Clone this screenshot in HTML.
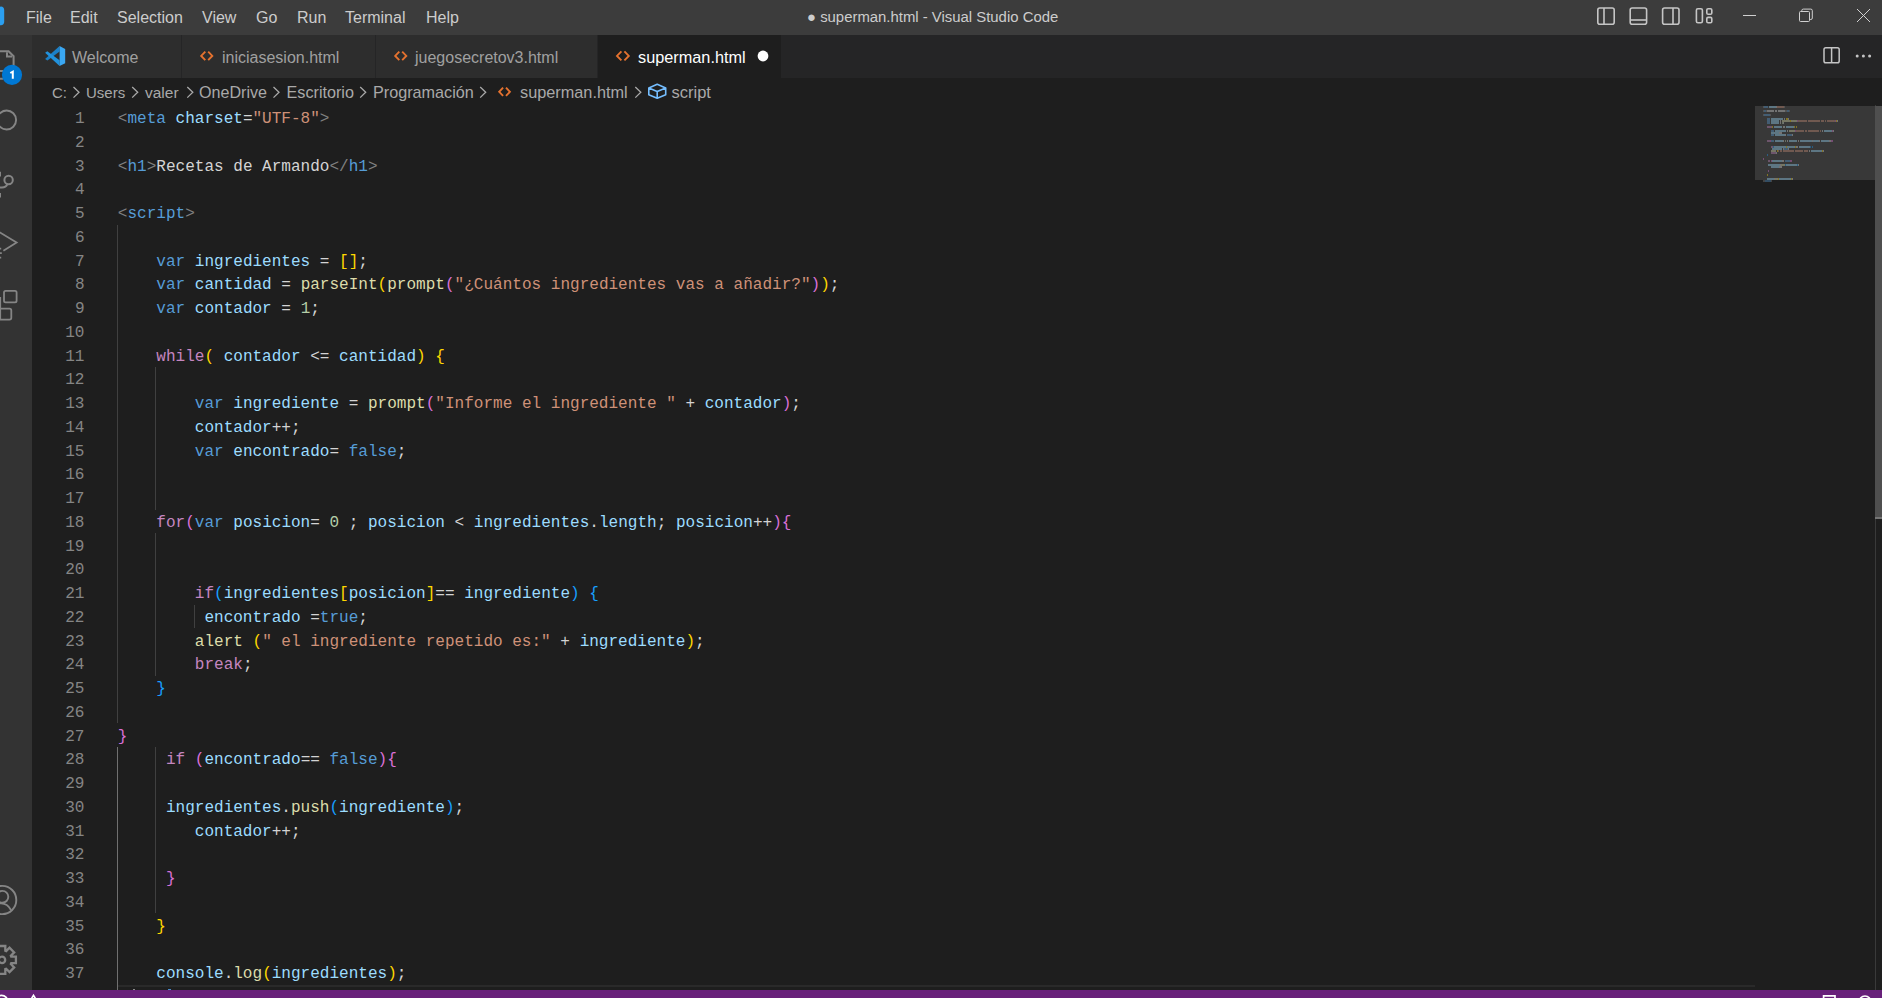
<!DOCTYPE html>
<html><head><meta charset="utf-8">
<style>
*{margin:0;padding:0;box-sizing:border-box}
html,body{width:1882px;height:998px;overflow:hidden;background:#1e1e1e;font-family:"Liberation Sans",sans-serif}
.abs{position:absolute}
#title{position:absolute;left:0;top:0;width:1882px;height:35px;background:#3c3c3c}
.mi{position:absolute;top:0;height:35px;line-height:35px;font-size:16px;color:#cccccc;white-space:nowrap}
#act{position:absolute;left:0;top:35px;width:32px;height:955px;background:#333333;overflow:hidden}
#tabs{position:absolute;left:32px;top:35px;width:1850px;height:43px;background:#252526}
.tab{position:absolute;top:0;height:43px;background:#2d2d2d;border-right:1px solid #252526}
.tt{position:absolute;top:36.2px;height:43px;line-height:43px;font-size:16px;color:#a0a0a0;white-space:nowrap}
#bc{position:absolute;left:32px;top:78px;width:1850px;height:27px;background:#1e1e1e}
.bt{position:absolute;top:79px;height:27px;line-height:27px;font-size:15px;color:#a9a9a9;white-space:nowrap}
.ln{position:absolute;left:32px;width:52.5px;text-align:right;height:23.75px;line-height:23.75px;font-family:"Liberation Mono",monospace;font-size:16.05px;color:#858585}
.cl{position:absolute;left:117.8px;height:23.75px;line-height:23.75px;font-family:"Liberation Mono",monospace;font-size:16.05px;white-space:pre;color:#d4d4d4}
.ig{position:absolute;width:1px}
.mm{position:absolute;height:2px;opacity:0.38}
#status{position:absolute;left:0;top:990px;width:1882px;height:8px;background:#68217a}
svg{position:absolute;overflow:visible}
</style></head><body>
<div id="title">
 <svg style="left:0;top:0" width="10" height="35"><path d="M-14 7 L1 6.6 Q4 7 4.2 10 L4.2 22 Q4 25 1 25.2 L-14 25 Z" fill="#2b9ff0"/></svg>
 <div class="mi" style="left:26px">File</div>
 <div class="mi" style="left:70px">Edit</div>
 <div class="mi" style="left:117px">Selection</div>
 <div class="mi" style="left:202px">View</div>
 <div class="mi" style="left:256px">Go</div>
 <div class="mi" style="left:297px">Run</div>
 <div class="mi" style="left:345px">Terminal</div>
 <div class="mi" style="left:426px">Help</div>
 <div class="mi" style="left:807px;font-size:14.9px;top:-0.4px">● superman.html - Visual Studio Code</div>
 <svg style="left:0;top:0" width="1882" height="35" fill="none" stroke="#c5c5c5" stroke-width="1.6">
  <rect x="1597.8" y="8" width="16.4" height="16.2" rx="2"/><line x1="1604" y1="8" x2="1604" y2="24.2"/>
  <rect x="1630.2" y="8" width="16.4" height="16.2" rx="2"/><line x1="1630.2" y1="20" x2="1646.6" y2="20"/>
  <rect x="1662.6" y="8" width="16.4" height="16.2" rx="2"/><line x1="1673" y1="8" x2="1673" y2="24.2"/>
  <rect x="1696.4" y="8.8" width="6" height="14" rx="1.5"/><rect x="1706.8" y="8.8" width="5" height="5.4" rx="1.3"/><rect x="1706.8" y="17.4" width="5" height="5.4" rx="1.3"/>
 </svg>
 <svg style="left:0;top:0" width="1882" height="35" fill="none" stroke="#d0d0d0" stroke-width="1">
  <line x1="1743" y1="15.5" x2="1756" y2="15.5"/>
  <rect x="1799.5" y="11.5" width="10" height="10" rx="1"/><path d="M1801.8 11.5 V10.6 Q1801.8 9.1 1803.3 9.1 H1810.8 Q1812.3 9.1 1812.3 10.6 V18 Q1812.3 19.5 1810.8 19.5 H1809.5"/>
  <path d="M1857 9 L1870 22 M1870 9 L1857 22"/>
 </svg>
</div>
<div id="act">
 <svg style="left:0;top:-35px" width="32" height="990" fill="none" stroke="#858585" stroke-width="2">
  <path d="M-12 51.2 H8.6 L13.6 56.2 V70"/><path d="M7 52.2 V56.6 H12"/>
  <path d="M-10 71 H3 M-10 78.8 H3"/>
  <circle cx="6.6" cy="120" r="9.5" stroke-width="1.9"/>
  <circle cx="8.6" cy="180" r="4.2" stroke-width="2"/><path d="M7.4 184.2 Q6 187.6 2 187.6 H-4 M0 171.8 V176.5 M0 193 V197.5" stroke-width="2"/>
  <path d="M-4 230 L16.6 242.6 L3.4 250.8" stroke-width="1.8"/><path d="M-3 248.6 H1.2 M-3 253.2 H1.8 M-3 257.6 H1.2" stroke-width="1.7"/>
  <rect x="4" y="290.8" width="12.6" height="11.6" rx="1.6" stroke-width="1.8"/><path d="M-6 308.6 H9.5 Q11.3 308.6 11.3 310.4 V317.8 Q11.3 319.6 9.5 319.6 H-6 M0.2 297 V320" stroke-width="1.8"/>
  <circle cx="2.2" cy="900" r="14.1" stroke-width="1.9"/><circle cx="2.4" cy="896.8" r="5.9" stroke-width="1.9"/><path d="M-6 903.4 H1 Q7.5 903.4 11 910" stroke-width="1.9"/>
 </svg>
 <svg style="left:0;top:-35px" width="32" height="990"><circle cx="12" cy="74.8" r="10.1" fill="#0078d4"/><path d="M10.3 73 L12.8 71.6 V78.7" stroke="#fff" stroke-width="2" fill="none"/></svg>
 <svg style="left:0;top:-35px" width="32" height="990" fill="none" stroke="#858585" stroke-width="2.3" stroke-linejoin="miter"><path d="M-1.30 950.67 L-1.30 945.99 L5.30 945.99 L5.30 950.67 L6.19 951.04 L9.51 947.73 L14.17 952.39 L10.86 955.71 L11.23 956.60 L15.91 956.60 L15.91 963.20 L11.23 963.20 L10.86 964.09 L14.17 967.41 L9.51 972.07 L6.19 968.76 L5.30 969.13 L5.30 973.81 L-1.30 973.81 L-1.30 969.13 L-2.19 968.76 L-5.51 972.07 L-10.17 967.41 L-6.86 964.09 L-7.23 963.20 L-11.91 963.20 L-11.91 956.60 L-7.23 956.60 L-6.86 955.71 L-10.17 952.39 L-5.51 947.73 L-2.19 951.04 Z"/><circle cx="2" cy="959.9" r="3.2"/></svg>
</div>
<div id="tabs">
 <div class="tab" style="left:0;width:150px"></div>
 <div class="tab" style="left:150px;width:194px"></div>
 <div class="tab" style="left:344px;width:222px"></div>
 <div class="tab" style="left:566px;width:183px;background:#1e1e1e;border-right:none"></div>
</div>
<svg style="left:44.9px;top:45.9px" width="20.2" height="20.1" viewBox="0 0 20.2 20.1">
 <path d="M14.6 0 L14.6 5.6 L2.4 14.6 L0.1 13 Z" fill="#1b80c8"/>
 <path d="M0.1 6.8 L2.3 5.3 L14.6 14.2 L14.6 20.1 Z" fill="#2192dd"/>
 <path d="M14.6 0 L20.2 3 L20.2 17.2 L14.6 20.1 Z" fill="#3aa7f2"/>
</svg>
<div class="tt" style="left:72px">Welcome</div>
<svg style="left:0;top:0" width="1882" height="110" fill="none" stroke="#e5722f" stroke-width="1.9" stroke-linecap="butt" stroke-linejoin="miter">
 <path d="M205.3 51.6 L201.2 55.9 L205.3 60.2 M208.2 51.6 L212.3 55.9 L208.2 60.2"/>
 <path d="M399.3 51.6 L395.2 55.9 L399.3 60.2 M402.2 51.6 L406.3 55.9 L402.2 60.2"/>
 <path d="M621.4 51.4 L617 55.9 L621.4 60.4 M624.4 51.4 L628.8 55.9 L624.4 60.4"/>
</svg>
<div class="tt" style="left:222px">iniciasesion.html</div>
<div class="tt" style="left:415px">juegosecretov3.html</div>
<div class="tt" style="left:638px;color:#ffffff;font-size:16.3px">superman.html</div>
<svg style="left:0;top:0" width="1882" height="110"><circle cx="763" cy="56" r="5.4" fill="#ffffff"/></svg>
<svg style="left:0;top:0" width="1882" height="110" fill="none" stroke="#c5c5c5" stroke-width="1.5">
 <rect x="1824" y="47.8" width="15.2" height="15" rx="1.8"/><line x1="1831.6" y1="47.8" x2="1831.6" y2="62.8"/>
</svg>
<svg style="left:0;top:0" width="1882" height="110" fill="#c5c5c5"><circle cx="1857.2" cy="56" r="1.5"/><circle cx="1863.4" cy="56" r="1.5"/><circle cx="1869.6" cy="56" r="1.5"/></svg>
<div id="bc"></div>
<svg style="left:0;top:0" width="1882" height="110" fill="none" stroke="#e5722f" stroke-width="1.9"><path d="M503.1 87.7 L499.2 91.8 L503.1 95.9 M506 87.7 L509.9 91.8 L506 95.9"/></svg>
<div class="bt" style="left:52px">C:</div>
<div class="bt" style="left:86px">Users</div>
<div class="bt" style="left:145px;font-size:15.5px">valer</div>
<div class="bt" style="left:199px;font-size:16.1px">OneDrive</div>
<div class="bt" style="left:286.5px;font-size:16.2px">Escritorio</div>
<div class="bt" style="left:373px;font-size:16.2px">Programación</div>
<div class="bt" style="left:520px;font-size:16.3px">superman.html</div>
<div class="bt" style="left:671.5px;font-size:16.5px">script</div>
<svg style="left:0;top:0" width="1882" height="110" fill="none" stroke="#a9a9a9" stroke-width="1.3">
 <path d="M73.5 87 L79 92.3 L73.5 97.6"/>
 <path d="M132.2 87 L137.7 92.3 L132.2 97.6"/>
 <path d="M187.3 87 L192.8 92.3 L187.3 97.6"/>
 <path d="M273.5 87 L279 92.3 L273.5 97.6"/>
 <path d="M360.2 87 L365.7 92.3 L360.2 97.6"/>
 <path d="M480.2 87 L485.7 92.3 L480.2 97.6"/>
 <path d="M635.3 87 L640.8 92.3 L635.3 97.6"/>
</svg>
<svg style="left:0;top:0" width="1882" height="110" fill="none" stroke="#75beff" stroke-width="1.6" stroke-linejoin="round">
 <path d="M657.2 84.3 L665.7 88 L665.7 94.8 L657.2 98.3 L648.8 94.8 L648.8 88 Z M648.8 88 L657.2 91.6 L665.7 88 M657.2 91.6 V98.3"/>
</svg>
<div class="ln" style="top:108.10px">1</div>
<div class="cl" style="top:108.10px"><span style="color:#808080">&lt;</span><span style="color:#569cd6">meta</span><span style="color:#d4d4d4"> </span><span style="color:#9cdcfe">charset</span><span style="color:#d4d4d4">=</span><span style="color:#ce9178">&quot;UTF-8&quot;</span><span style="color:#808080">&gt;</span></div>
<div class="ln" style="top:131.85px">2</div>
<div class="ln" style="top:155.60px">3</div>
<div class="cl" style="top:155.60px"><span style="color:#808080">&lt;</span><span style="color:#569cd6">h1</span><span style="color:#808080">&gt;</span><span style="color:#d4d4d4">Recetas de Armando</span><span style="color:#808080">&lt;/</span><span style="color:#569cd6">h1</span><span style="color:#808080">&gt;</span></div>
<div class="ln" style="top:179.35px">4</div>
<div class="ln" style="top:203.10px">5</div>
<div class="cl" style="top:203.10px"><span style="color:#808080">&lt;</span><span style="color:#569cd6">script</span><span style="color:#808080">&gt;</span></div>
<div class="ln" style="top:226.85px">6</div>
<div class="ln" style="top:250.60px">7</div>
<div class="cl" style="top:250.60px"><span style="color:#d4d4d4">    </span><span style="color:#569cd6">var</span><span style="color:#d4d4d4"> </span><span style="color:#9cdcfe">ingredientes</span><span style="color:#d4d4d4"> = </span><span style="color:#ffd700">[]</span><span style="color:#d4d4d4">;</span></div>
<div class="ln" style="top:274.35px">8</div>
<div class="cl" style="top:274.35px"><span style="color:#d4d4d4">    </span><span style="color:#569cd6">var</span><span style="color:#d4d4d4"> </span><span style="color:#9cdcfe">cantidad</span><span style="color:#d4d4d4"> = </span><span style="color:#dcdcaa">parseInt</span><span style="color:#ffd700">(</span><span style="color:#dcdcaa">prompt</span><span style="color:#da70d6">(</span><span style="color:#ce9178">&quot;¿Cuántos ingredientes vas a añadir?&quot;</span><span style="color:#da70d6">)</span><span style="color:#ffd700">)</span><span style="color:#d4d4d4">;</span></div>
<div class="ln" style="top:298.10px">9</div>
<div class="cl" style="top:298.10px"><span style="color:#d4d4d4">    </span><span style="color:#569cd6">var</span><span style="color:#d4d4d4"> </span><span style="color:#9cdcfe">contador</span><span style="color:#d4d4d4"> = </span><span style="color:#b5cea8">1</span><span style="color:#d4d4d4">;</span></div>
<div class="ln" style="top:321.85px">10</div>
<div class="ln" style="top:345.60px">11</div>
<div class="cl" style="top:345.60px"><span style="color:#d4d4d4">    </span><span style="color:#c586c0">while</span><span style="color:#ffd700">(</span><span style="color:#d4d4d4"> </span><span style="color:#9cdcfe">contador</span><span style="color:#d4d4d4"> &lt;= </span><span style="color:#9cdcfe">cantidad</span><span style="color:#ffd700">)</span><span style="color:#d4d4d4"> </span><span style="color:#ffd700">{</span></div>
<div class="ln" style="top:369.35px">12</div>
<div class="ln" style="top:393.10px">13</div>
<div class="cl" style="top:393.10px"><span style="color:#d4d4d4">        </span><span style="color:#569cd6">var</span><span style="color:#d4d4d4"> </span><span style="color:#9cdcfe">ingrediente</span><span style="color:#d4d4d4"> = </span><span style="color:#dcdcaa">prompt</span><span style="color:#da70d6">(</span><span style="color:#ce9178">&quot;Informe el ingrediente &quot;</span><span style="color:#d4d4d4"> + </span><span style="color:#9cdcfe">contador</span><span style="color:#da70d6">)</span><span style="color:#d4d4d4">;</span></div>
<div class="ln" style="top:416.85px">14</div>
<div class="cl" style="top:416.85px"><span style="color:#d4d4d4">        </span><span style="color:#9cdcfe">contador</span><span style="color:#d4d4d4">++;</span></div>
<div class="ln" style="top:440.60px">15</div>
<div class="cl" style="top:440.60px"><span style="color:#d4d4d4">        </span><span style="color:#569cd6">var</span><span style="color:#d4d4d4"> </span><span style="color:#9cdcfe">encontrado</span><span style="color:#d4d4d4">= </span><span style="color:#569cd6">false</span><span style="color:#d4d4d4">;</span></div>
<div class="ln" style="top:464.35px">16</div>
<div class="ln" style="top:488.10px">17</div>
<div class="ln" style="top:511.85px">18</div>
<div class="cl" style="top:511.85px"><span style="color:#d4d4d4">    </span><span style="color:#c586c0">for</span><span style="color:#da70d6">(</span><span style="color:#569cd6">var</span><span style="color:#d4d4d4"> </span><span style="color:#9cdcfe">posicion</span><span style="color:#d4d4d4">= </span><span style="color:#b5cea8">0</span><span style="color:#d4d4d4"> ; </span><span style="color:#9cdcfe">posicion</span><span style="color:#d4d4d4"> &lt; </span><span style="color:#9cdcfe">ingredientes</span><span style="color:#d4d4d4">.</span><span style="color:#9cdcfe">length</span><span style="color:#d4d4d4">; </span><span style="color:#9cdcfe">posicion</span><span style="color:#d4d4d4">++</span><span style="color:#da70d6">)</span><span style="color:#da70d6">{</span></div>
<div class="ln" style="top:535.60px">19</div>
<div class="ln" style="top:559.35px">20</div>
<div class="ln" style="top:583.10px">21</div>
<div class="cl" style="top:583.10px"><span style="color:#d4d4d4">        </span><span style="color:#c586c0">if</span><span style="color:#179fff">(</span><span style="color:#9cdcfe">ingredientes</span><span style="color:#ffd700">[</span><span style="color:#9cdcfe">posicion</span><span style="color:#ffd700">]</span><span style="color:#d4d4d4">== </span><span style="color:#9cdcfe">ingrediente</span><span style="color:#179fff">)</span><span style="color:#d4d4d4"> </span><span style="color:#179fff">{</span></div>
<div class="ln" style="top:606.85px">22</div>
<div class="cl" style="top:606.85px"><span style="color:#d4d4d4">         </span><span style="color:#9cdcfe">encontrado</span><span style="color:#d4d4d4"> =</span><span style="color:#569cd6">true</span><span style="color:#d4d4d4">;</span></div>
<div class="ln" style="top:630.60px">23</div>
<div class="cl" style="top:630.60px"><span style="color:#d4d4d4">        </span><span style="color:#dcdcaa">alert</span><span style="color:#d4d4d4"> </span><span style="color:#ffd700">(</span><span style="color:#ce9178">&quot; el ingrediente repetido es:&quot;</span><span style="color:#d4d4d4"> + </span><span style="color:#9cdcfe">ingrediente</span><span style="color:#ffd700">)</span><span style="color:#d4d4d4">;</span></div>
<div class="ln" style="top:654.35px">24</div>
<div class="cl" style="top:654.35px"><span style="color:#d4d4d4">        </span><span style="color:#c586c0">break</span><span style="color:#d4d4d4">;</span></div>
<div class="ln" style="top:678.10px">25</div>
<div class="cl" style="top:678.10px"><span style="color:#d4d4d4">    </span><span style="color:#179fff">}</span></div>
<div class="ln" style="top:701.85px">26</div>
<div class="ln" style="top:725.60px">27</div>
<div class="cl" style="top:725.60px"><span style="color:#da70d6">}</span></div>
<div class="ln" style="top:749.35px">28</div>
<div class="cl" style="top:749.35px"><span style="color:#d4d4d4">     </span><span style="color:#c586c0">if</span><span style="color:#d4d4d4"> </span><span style="color:#da70d6">(</span><span style="color:#9cdcfe">encontrado</span><span style="color:#d4d4d4">== </span><span style="color:#569cd6">false</span><span style="color:#da70d6">)</span><span style="color:#da70d6">{</span></div>
<div class="ln" style="top:773.10px">29</div>
<div class="ln" style="top:796.85px">30</div>
<div class="cl" style="top:796.85px"><span style="color:#d4d4d4">     </span><span style="color:#9cdcfe">ingredientes</span><span style="color:#d4d4d4">.</span><span style="color:#dcdcaa">push</span><span style="color:#179fff">(</span><span style="color:#9cdcfe">ingrediente</span><span style="color:#179fff">)</span><span style="color:#d4d4d4">;</span></div>
<div class="ln" style="top:820.60px">31</div>
<div class="cl" style="top:820.60px"><span style="color:#d4d4d4">        </span><span style="color:#9cdcfe">contador</span><span style="color:#d4d4d4">++;</span></div>
<div class="ln" style="top:844.35px">32</div>
<div class="ln" style="top:868.10px">33</div>
<div class="cl" style="top:868.10px"><span style="color:#d4d4d4">     </span><span style="color:#da70d6">}</span></div>
<div class="ln" style="top:891.85px">34</div>
<div class="ln" style="top:915.60px">35</div>
<div class="cl" style="top:915.60px"><span style="color:#d4d4d4">    </span><span style="color:#ffd700">}</span></div>
<div class="ln" style="top:939.35px">36</div>
<div class="ln" style="top:963.10px">37</div>
<div class="cl" style="top:963.10px"><span style="color:#d4d4d4">    </span><span style="color:#9cdcfe">console</span><span style="color:#d4d4d4">.</span><span style="color:#dcdcaa">log</span><span style="color:#ffd700">(</span><span style="color:#9cdcfe">ingredientes</span><span style="color:#ffd700">)</span><span style="color:#d4d4d4">;</span></div>
<div class="ln" style="top:986.85px">38</div>
<div class="cl" style="top:986.85px"><span style="color:#808080">&lt;/</span><span style="color:#569cd6">script</span><span style="color:#808080">&gt;</span></div>
<div class="ig" style="left:117.00px;top:224.65px;height:498.75px;background:#404040"></div>
<div class="ig" style="left:117.00px;top:747.15px;height:261.25px;background:#707070"></div>
<div class="ig" style="left:155.00px;top:367.15px;height:142.50px;background:#404040"></div>
<div class="ig" style="left:155.00px;top:533.40px;height:142.50px;background:#404040"></div>
<div class="ig" style="left:194.00px;top:604.65px;height:23.75px;background:#404040"></div>
<div class="ig" style="left:155.00px;top:747.15px;height:166.25px;background:#404040"></div>
<div class="abs" style="left:1755px;top:106px;width:120px;height:74px;background:#383838"></div>
<div class="mm" style="left:1763.0px;top:106.0px;width:1px;background:#808080"></div><div class="mm" style="left:1764.0px;top:106.0px;width:4px;background:#569cd6"></div><div class="mm" style="left:1769.0px;top:106.0px;width:7px;background:#9cdcfe"></div><div class="mm" style="left:1776.0px;top:106.0px;width:1px;background:#d4d4d4"></div><div class="mm" style="left:1777.0px;top:106.0px;width:7px;background:#ce9178"></div><div class="mm" style="left:1784.0px;top:106.0px;width:1px;background:#808080"></div><div class="mm" style="left:1763.0px;top:110.0px;width:1px;background:#808080"></div><div class="mm" style="left:1764.0px;top:110.0px;width:2px;background:#569cd6"></div><div class="mm" style="left:1766.0px;top:110.0px;width:1px;background:#808080"></div><div class="mm" style="left:1767.0px;top:110.0px;width:7px;background:#d4d4d4"></div><div class="mm" style="left:1775.0px;top:110.0px;width:2px;background:#d4d4d4"></div><div class="mm" style="left:1778.0px;top:110.0px;width:7px;background:#d4d4d4"></div><div class="mm" style="left:1785.0px;top:110.0px;width:2px;background:#808080"></div><div class="mm" style="left:1787.0px;top:110.0px;width:2px;background:#569cd6"></div><div class="mm" style="left:1789.0px;top:110.0px;width:1px;background:#808080"></div><div class="mm" style="left:1763.0px;top:114.0px;width:1px;background:#808080"></div><div class="mm" style="left:1764.0px;top:114.0px;width:6px;background:#569cd6"></div><div class="mm" style="left:1770.0px;top:114.0px;width:1px;background:#808080"></div><div class="mm" style="left:1767.0px;top:118.0px;width:3px;background:#569cd6"></div><div class="mm" style="left:1771.0px;top:118.0px;width:12px;background:#9cdcfe"></div><div class="mm" style="left:1784.0px;top:118.0px;width:1px;background:#d4d4d4"></div><div class="mm" style="left:1786.0px;top:118.0px;width:2px;background:#ffd700"></div><div class="mm" style="left:1788.0px;top:118.0px;width:1px;background:#d4d4d4"></div><div class="mm" style="left:1767.0px;top:120.0px;width:3px;background:#569cd6"></div><div class="mm" style="left:1771.0px;top:120.0px;width:8px;background:#9cdcfe"></div><div class="mm" style="left:1780.0px;top:120.0px;width:1px;background:#d4d4d4"></div><div class="mm" style="left:1782.0px;top:120.0px;width:8px;background:#dcdcaa"></div><div class="mm" style="left:1790.0px;top:120.0px;width:1px;background:#ffd700"></div><div class="mm" style="left:1791.0px;top:120.0px;width:6px;background:#dcdcaa"></div><div class="mm" style="left:1797.0px;top:120.0px;width:1px;background:#da70d6"></div><div class="mm" style="left:1798.0px;top:120.0px;width:9px;background:#ce9178"></div><div class="mm" style="left:1808.0px;top:120.0px;width:12px;background:#ce9178"></div><div class="mm" style="left:1821.0px;top:120.0px;width:3px;background:#ce9178"></div><div class="mm" style="left:1825.0px;top:120.0px;width:1px;background:#ce9178"></div><div class="mm" style="left:1827.0px;top:120.0px;width:8px;background:#ce9178"></div><div class="mm" style="left:1835.0px;top:120.0px;width:1px;background:#da70d6"></div><div class="mm" style="left:1836.0px;top:120.0px;width:1px;background:#ffd700"></div><div class="mm" style="left:1837.0px;top:120.0px;width:1px;background:#d4d4d4"></div><div class="mm" style="left:1767.0px;top:122.0px;width:3px;background:#569cd6"></div><div class="mm" style="left:1771.0px;top:122.0px;width:8px;background:#9cdcfe"></div><div class="mm" style="left:1780.0px;top:122.0px;width:1px;background:#d4d4d4"></div><div class="mm" style="left:1782.0px;top:122.0px;width:1px;background:#b5cea8"></div><div class="mm" style="left:1783.0px;top:122.0px;width:1px;background:#d4d4d4"></div><div class="mm" style="left:1767.0px;top:126.0px;width:5px;background:#c586c0"></div><div class="mm" style="left:1772.0px;top:126.0px;width:1px;background:#ffd700"></div><div class="mm" style="left:1774.0px;top:126.0px;width:8px;background:#9cdcfe"></div><div class="mm" style="left:1783.0px;top:126.0px;width:2px;background:#d4d4d4"></div><div class="mm" style="left:1786.0px;top:126.0px;width:8px;background:#9cdcfe"></div><div class="mm" style="left:1794.0px;top:126.0px;width:1px;background:#ffd700"></div><div class="mm" style="left:1796.0px;top:126.0px;width:1px;background:#ffd700"></div><div class="mm" style="left:1771.0px;top:130.0px;width:3px;background:#569cd6"></div><div class="mm" style="left:1775.0px;top:130.0px;width:11px;background:#9cdcfe"></div><div class="mm" style="left:1787.0px;top:130.0px;width:1px;background:#d4d4d4"></div><div class="mm" style="left:1789.0px;top:130.0px;width:6px;background:#dcdcaa"></div><div class="mm" style="left:1795.0px;top:130.0px;width:1px;background:#da70d6"></div><div class="mm" style="left:1796.0px;top:130.0px;width:8px;background:#ce9178"></div><div class="mm" style="left:1805.0px;top:130.0px;width:2px;background:#ce9178"></div><div class="mm" style="left:1808.0px;top:130.0px;width:11px;background:#ce9178"></div><div class="mm" style="left:1820.0px;top:130.0px;width:1px;background:#ce9178"></div><div class="mm" style="left:1822.0px;top:130.0px;width:1px;background:#d4d4d4"></div><div class="mm" style="left:1824.0px;top:130.0px;width:8px;background:#9cdcfe"></div><div class="mm" style="left:1832.0px;top:130.0px;width:1px;background:#da70d6"></div><div class="mm" style="left:1833.0px;top:130.0px;width:1px;background:#d4d4d4"></div><div class="mm" style="left:1771.0px;top:132.0px;width:8px;background:#9cdcfe"></div><div class="mm" style="left:1779.0px;top:132.0px;width:3px;background:#d4d4d4"></div><div class="mm" style="left:1771.0px;top:134.0px;width:3px;background:#569cd6"></div><div class="mm" style="left:1775.0px;top:134.0px;width:10px;background:#9cdcfe"></div><div class="mm" style="left:1785.0px;top:134.0px;width:1px;background:#d4d4d4"></div><div class="mm" style="left:1787.0px;top:134.0px;width:5px;background:#569cd6"></div><div class="mm" style="left:1792.0px;top:134.0px;width:1px;background:#d4d4d4"></div><div class="mm" style="left:1767.0px;top:140.0px;width:3px;background:#c586c0"></div><div class="mm" style="left:1770.0px;top:140.0px;width:1px;background:#da70d6"></div><div class="mm" style="left:1771.0px;top:140.0px;width:3px;background:#569cd6"></div><div class="mm" style="left:1775.0px;top:140.0px;width:8px;background:#9cdcfe"></div><div class="mm" style="left:1783.0px;top:140.0px;width:1px;background:#d4d4d4"></div><div class="mm" style="left:1785.0px;top:140.0px;width:1px;background:#b5cea8"></div><div class="mm" style="left:1787.0px;top:140.0px;width:1px;background:#d4d4d4"></div><div class="mm" style="left:1789.0px;top:140.0px;width:8px;background:#9cdcfe"></div><div class="mm" style="left:1798.0px;top:140.0px;width:1px;background:#d4d4d4"></div><div class="mm" style="left:1800.0px;top:140.0px;width:12px;background:#9cdcfe"></div><div class="mm" style="left:1812.0px;top:140.0px;width:1px;background:#d4d4d4"></div><div class="mm" style="left:1813.0px;top:140.0px;width:6px;background:#9cdcfe"></div><div class="mm" style="left:1819.0px;top:140.0px;width:1px;background:#d4d4d4"></div><div class="mm" style="left:1821.0px;top:140.0px;width:8px;background:#9cdcfe"></div><div class="mm" style="left:1829.0px;top:140.0px;width:2px;background:#d4d4d4"></div><div class="mm" style="left:1831.0px;top:140.0px;width:1px;background:#da70d6"></div><div class="mm" style="left:1832.0px;top:140.0px;width:1px;background:#da70d6"></div><div class="mm" style="left:1771.0px;top:146.0px;width:2px;background:#c586c0"></div><div class="mm" style="left:1773.0px;top:146.0px;width:1px;background:#179fff"></div><div class="mm" style="left:1774.0px;top:146.0px;width:12px;background:#9cdcfe"></div><div class="mm" style="left:1786.0px;top:146.0px;width:1px;background:#ffd700"></div><div class="mm" style="left:1787.0px;top:146.0px;width:8px;background:#9cdcfe"></div><div class="mm" style="left:1795.0px;top:146.0px;width:1px;background:#ffd700"></div><div class="mm" style="left:1796.0px;top:146.0px;width:2px;background:#d4d4d4"></div><div class="mm" style="left:1799.0px;top:146.0px;width:11px;background:#9cdcfe"></div><div class="mm" style="left:1810.0px;top:146.0px;width:1px;background:#179fff"></div><div class="mm" style="left:1812.0px;top:146.0px;width:1px;background:#179fff"></div><div class="mm" style="left:1772.0px;top:148.0px;width:10px;background:#9cdcfe"></div><div class="mm" style="left:1783.0px;top:148.0px;width:1px;background:#d4d4d4"></div><div class="mm" style="left:1784.0px;top:148.0px;width:4px;background:#569cd6"></div><div class="mm" style="left:1788.0px;top:148.0px;width:1px;background:#d4d4d4"></div><div class="mm" style="left:1771.0px;top:150.0px;width:5px;background:#dcdcaa"></div><div class="mm" style="left:1777.0px;top:150.0px;width:1px;background:#ffd700"></div><div class="mm" style="left:1778.0px;top:150.0px;width:1px;background:#ce9178"></div><div class="mm" style="left:1780.0px;top:150.0px;width:2px;background:#ce9178"></div><div class="mm" style="left:1783.0px;top:150.0px;width:11px;background:#ce9178"></div><div class="mm" style="left:1795.0px;top:150.0px;width:8px;background:#ce9178"></div><div class="mm" style="left:1804.0px;top:150.0px;width:4px;background:#ce9178"></div><div class="mm" style="left:1809.0px;top:150.0px;width:1px;background:#d4d4d4"></div><div class="mm" style="left:1811.0px;top:150.0px;width:11px;background:#9cdcfe"></div><div class="mm" style="left:1822.0px;top:150.0px;width:1px;background:#ffd700"></div><div class="mm" style="left:1823.0px;top:150.0px;width:1px;background:#d4d4d4"></div><div class="mm" style="left:1771.0px;top:152.0px;width:5px;background:#c586c0"></div><div class="mm" style="left:1776.0px;top:152.0px;width:1px;background:#d4d4d4"></div><div class="mm" style="left:1767.0px;top:154.0px;width:1px;background:#179fff"></div><div class="mm" style="left:1763.0px;top:158.0px;width:1px;background:#da70d6"></div><div class="mm" style="left:1768.0px;top:160.0px;width:2px;background:#c586c0"></div><div class="mm" style="left:1771.0px;top:160.0px;width:1px;background:#da70d6"></div><div class="mm" style="left:1772.0px;top:160.0px;width:10px;background:#9cdcfe"></div><div class="mm" style="left:1782.0px;top:160.0px;width:2px;background:#d4d4d4"></div><div class="mm" style="left:1785.0px;top:160.0px;width:5px;background:#569cd6"></div><div class="mm" style="left:1790.0px;top:160.0px;width:1px;background:#da70d6"></div><div class="mm" style="left:1791.0px;top:160.0px;width:1px;background:#da70d6"></div><div class="mm" style="left:1768.0px;top:164.0px;width:12px;background:#9cdcfe"></div><div class="mm" style="left:1780.0px;top:164.0px;width:1px;background:#d4d4d4"></div><div class="mm" style="left:1781.0px;top:164.0px;width:4px;background:#dcdcaa"></div><div class="mm" style="left:1785.0px;top:164.0px;width:1px;background:#179fff"></div><div class="mm" style="left:1786.0px;top:164.0px;width:11px;background:#9cdcfe"></div><div class="mm" style="left:1797.0px;top:164.0px;width:1px;background:#179fff"></div><div class="mm" style="left:1798.0px;top:164.0px;width:1px;background:#d4d4d4"></div><div class="mm" style="left:1771.0px;top:166.0px;width:8px;background:#9cdcfe"></div><div class="mm" style="left:1779.0px;top:166.0px;width:3px;background:#d4d4d4"></div><div class="mm" style="left:1768.0px;top:170.0px;width:1px;background:#da70d6"></div><div class="mm" style="left:1767.0px;top:174.0px;width:1px;background:#ffd700"></div><div class="mm" style="left:1767.0px;top:178.0px;width:7px;background:#9cdcfe"></div><div class="mm" style="left:1774.0px;top:178.0px;width:1px;background:#d4d4d4"></div><div class="mm" style="left:1775.0px;top:178.0px;width:3px;background:#dcdcaa"></div><div class="mm" style="left:1778.0px;top:178.0px;width:1px;background:#ffd700"></div><div class="mm" style="left:1779.0px;top:178.0px;width:12px;background:#9cdcfe"></div><div class="mm" style="left:1791.0px;top:178.0px;width:1px;background:#ffd700"></div><div class="mm" style="left:1792.0px;top:178.0px;width:1px;background:#d4d4d4"></div><div class="mm" style="left:1763.0px;top:180.0px;width:2px;background:#808080"></div><div class="mm" style="left:1765.0px;top:180.0px;width:6px;background:#569cd6"></div><div class="mm" style="left:1771.0px;top:180.0px;width:1px;background:#808080"></div>
<div class="abs" style="left:1875px;top:105px;width:1px;height:885px;background:#3a3a3a"></div>
<div class="abs" style="left:1875px;top:106px;width:7px;height:413px;background:#4f4f4f"></div>
<div class="abs" style="left:1875px;top:517px;width:7px;height:2px;background:#757575"></div>
<div class="abs" style="left:118px;top:985px;width:1637px;height:2px;background:#2a2a2a"></div>
<div class="abs" style="left:133px;top:989px;width:2px;height:1px;background:#8a8a8a"></div><div class="abs" style="left:168px;top:989px;width:3px;height:1px;background:#4a8ccc"></div>
<div id="status"></div>
<svg style="left:0;top:0" width="1882" height="998" fill="none" stroke="#ffffff" stroke-width="1.7">
 <circle cx="1.5" cy="1002" r="6.6"/>
 <path d="M27 1006 L33.5 995.3 L40 1006"/>
 <path d="M1823.6 1004 V995.8 H1835 V1004"/>
 <circle cx="1865" cy="1002" r="6"/>
</svg>
</body></html>
